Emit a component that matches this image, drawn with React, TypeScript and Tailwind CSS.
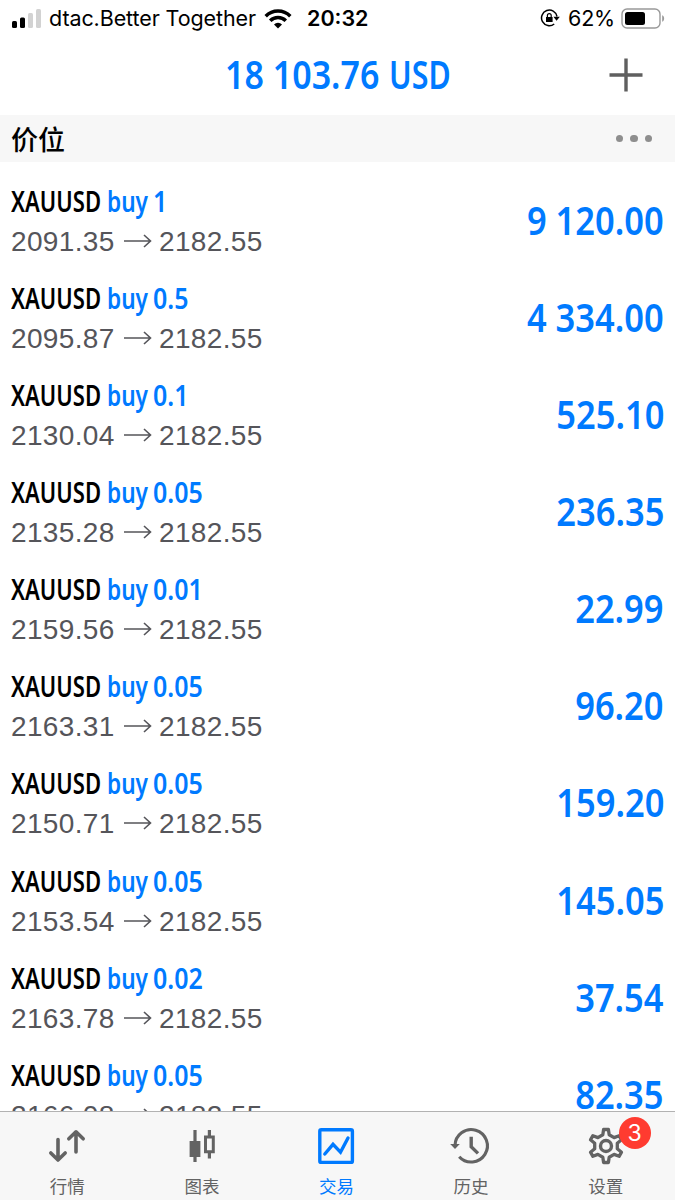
import type { ReactNode } from "react";

interface Position {
  volume: string;
  open: string;
  profit: string;
}

const positions: Position[] = [
  { volume: "1", open: "2091.35", profit: "9 120.00" },
  { volume: "0.5", open: "2095.87", profit: "4 334.00" },
  { volume: "0.1", open: "2130.04", profit: "525.10" },
  { volume: "0.05", open: "2135.28", profit: "236.35" },
  { volume: "0.01", open: "2159.56", profit: "22.99" },
  { volume: "0.05", open: "2163.31", profit: "96.20" },
  { volume: "0.05", open: "2150.71", profit: "159.20" },
  { volume: "0.05", open: "2153.54", profit: "145.05" },
  { volume: "0.02", open: "2163.78", profit: "37.54" },
  { volume: "0.05", open: "2166.08", profit: "82.35" },
];

const StatusBar = () => (
  <div className="flex h-[37px] shrink-0 items-center font-['Inter',sans-serif] text-black">
    <svg className="ml-3 shrink-0" width="30" height="20" viewBox="0 0 30 20">
      <rect x="0" y="12" width="5" height="7" rx="1.5" />
      <rect x="8" y="8.5" width="5" height="10.5" rx="1.5" />
      <rect x="16" y="4" width="5" height="15" rx="1.5" fill="#d2d2d2" />
      <rect x="24" y="0" width="5" height="19" rx="1.5" fill="#d2d2d2" />
    </svg>
    <span className="ml-[7px] w-[208px] whitespace-nowrap text-[21.5px] tracking-[-0.1px]">dtac.Better Together</span>
    <svg className="ml-[7px] shrink-0" width="28" height="20" viewBox="0 0 28 20" fill="none" stroke="#000" strokeWidth="3.5">
      <path d="M1.7 7.2a17.4 17.4 0 0 1 24.6 0" />
      <path d="M6.2 11.8a11 11 0 0 1 15.6 0" />
      <path d="M14 19.5l-4-4a5.7 5.7 0 0 1 8 0z" fill="#000" stroke="none" />
    </svg>
    <span className="ml-[15px] whitespace-nowrap text-[21.5px] font-semibold">20:32</span>
    <div className="ml-auto mr-[10px] flex items-center">
      <svg className="mb-px mr-[8px]" width="20" height="18" viewBox="0 0 20 18" fill="none" stroke="#000" strokeWidth="1.5">
        <path d="M17 7.5A7.8 7.8 0 1 0 14.2 15" />
        <path d="M13.4 7.7h6.4l-3.2 4z" fill="#000" stroke="none" />
        <rect x="6" y="8" width="6.6" height="5" fill="#000" stroke="none" />
        <path d="M7.4 8V6.6a1.9 1.9 0 0 1 3.8 0V8" strokeWidth="1.2" />
      </svg>
      <span className="w-[46px] whitespace-nowrap text-[21.5px] tracking-[-0.2px]">62%</span>
      <svg className="mb-px ml-[7px]" width="44" height="21" viewBox="0 0 44 21">
        <rect x="1" y="1" width="38" height="19" rx="5" fill="none" stroke="#999" strokeWidth="1.4" />
        <rect x="4" y="4" width="20" height="13" rx="2.5" />
        <path d="M41.2 7.2c2.6 1 2.6 5.6 0 6.6z" fill="#999" />
      </svg>
    </div>
  </div>
);

const PositionRow = ({ volume, open, profit }: Position) => (
  <div className="flex h-[97.15px] shrink-0 items-center justify-between pl-[11px] pr-[11px]">
    <div>
      <div className="flex h-10 whitespace-nowrap font-['Noto_Sans',sans-serif] text-[29px] font-semibold leading-[40px] text-[#007aff]">
        <span className="w-[96px] origin-left scale-x-[0.76] text-black">XAUUSD</span>
        <span className="w-[46px] origin-left scale-x-[0.78]">buy</span>
        <span className="origin-left scale-x-[0.86]">{volume}</span>
      </div>
      <div className="flex h-10 items-center whitespace-nowrap font-['Liberation_Sans',sans-serif] text-[28px] leading-[40px] tracking-[0.35px] text-[#55555a]">
        <span className="mt-[2px] w-[112px]">{open}</span>
        <svg width="29" height="14" viewBox="0 0 29 14" fill="none" stroke="currentColor" strokeWidth="1.6">
          <path d="M1 7h26M21 1l6.5 6-6.5 6" />
        </svg>
        <span className="ml-[7px] mt-[2px]">2182.55</span>
      </div>
    </div>
    <span className="mb-[2px] origin-right scale-x-[0.862] whitespace-nowrap font-['Noto_Sans',sans-serif] text-[40px] font-semibold leading-none text-[#007aff]">
      {profit}
    </span>
  </div>
);

interface TabProps {
  label: string;
  active?: boolean;
  badge?: string;
  children: ReactNode;
}

const Tab = ({ label, active = false, badge, children }: TabProps) => (
  <div className={`flex flex-1 flex-col items-center pt-[14px] ${active ? "text-[#007aff]" : "text-[#636363]"}`}>
    <div className="relative h-10 w-10">
      <svg className="overflow-visible" width="40" height="40" viewBox="0 0 40 40" fill="none" stroke="currentColor">
        {children}
      </svg>
      {badge && (
        <span className="absolute left-[33px] top-[-9px] flex h-8 w-8 items-center justify-center rounded-full bg-[#ff3b30] font-['Inter',sans-serif] text-[23px] text-white">
          {badge}
        </span>
      )}
    </div>
    <span className="mt-[7px] font-['Noto_Sans_CJK_SC',sans-serif] text-[17.5px] leading-[26px]">{label}</span>
  </div>
);

const App = () => (
  <div className="flex h-[1200px] w-[675px] flex-col overflow-hidden bg-white">
    <StatusBar />
    <header className="grid h-[78px] shrink-0 grid-cols-[1fr_auto_1fr] items-center pb-[3px]">
      <span />
      <h1 className="mb-px flex w-[225px] whitespace-nowrap font-['Noto_Sans',sans-serif] text-[40px] font-semibold leading-none text-[#007aff]">
        <span className="w-[163.5px] origin-left scale-x-[0.85]">18 103.76</span>
        <span className="origin-left scale-x-[0.76]">USD</span>
      </h1>
      <svg className="mr-8 justify-self-end" width="34" height="34" viewBox="0 0 34 34" stroke="#5f5f5f" strokeWidth="3.4">
        <path d="M.5 17h33M17 .5v33" />
      </svg>
    </header>
    <div className="flex h-[47px] shrink-0 items-center justify-between bg-[#f7f7f7] pl-[11px] pr-[23px]">
      <h2 className="mb-px font-['Noto_Sans_CJK_SC',sans-serif] text-[27px] font-medium leading-none">价位</h2>
      <div className="flex gap-[7px]">
        <span className="h-[7.5px] w-[7.5px] rounded-full bg-[#8e8e8e]" />
        <span className="h-[7.5px] w-[7.5px] rounded-full bg-[#8e8e8e]" />
        <span className="h-[7.5px] w-[7.5px] rounded-full bg-[#8e8e8e]" />
      </div>
    </div>
    <main className="flex min-h-0 flex-1 flex-col overflow-hidden pt-[10px]">
      {positions.map((p) => (
        <PositionRow key={p.open} {...p} />
      ))}
    </main>
    <nav className="flex h-[89px] shrink-0 border-t border-[#b2b2b2] bg-[#f7f7f7] pr-[2px]">
      <Tab label="行情">
        <path d="M11 13.5v20.5M3.8 27l7.2 7 7.2-7M29 26V5.8M21.8 12.8l7.2-7 7.2 7" strokeWidth="3.6" strokeLinecap="round" strokeLinejoin="round" />
      </Tab>
      <Tab label="图表">
        <path d="M13 4v32" strokeWidth="3.2" />
        <path d="M7.6 15h10.8v16H7.6z" fill="currentColor" stroke="none" />
        <path d="M27.4 4v6M27.4 27v5.5" strokeWidth="3.2" />
        <path d="M23.5 11h7.8v14.8h-7.8z" strokeWidth="3" />
      </Tab>
      <Tab label="交易" active>
        <rect x="3.8" y="3.8" width="32.6" height="32.6" rx="1.5" strokeWidth="3.4" />
        <path d="M8.8 28L17 18.4l7.5 7.8L32 12" strokeWidth="3.4" strokeLinecap="round" />
      </Tab>
      <Tab label="历史">
        <path d="M4 19.7A16.2 16.2 0 1 1 8.2 30.7" strokeWidth="3.1" />
        <path d="M-.8 18h9.6L4 23z" fill="currentColor" stroke="none" />
        <path d="M20.2 10.8v10l6.8 6.6" strokeWidth="3.4" />
      </Tab>
      <Tab label="设置" badge="3">
        <path
          d="M17.6 3.5H22.4L23.2 8.8L28.1 11.6L33.1 9.7L35.5 13.8L31.3 17.2V22.8L35.5 26.2L33.1 30.3L28.1 28.4L23.2 31.2L22.4 36.5H17.6L16.8 31.2L11.9 28.4L6.9 30.3L4.5 26.2L8.7 22.8V17.2L4.5 13.8L6.9 9.7L11.9 11.6L16.8 8.8Z"
          strokeWidth="3.3"
          strokeLinejoin="round"
        />
        <circle cx="20" cy="20" r="5.5" strokeWidth="3.4" />
      </Tab>
    </nav>
  </div>
);

export default App;
